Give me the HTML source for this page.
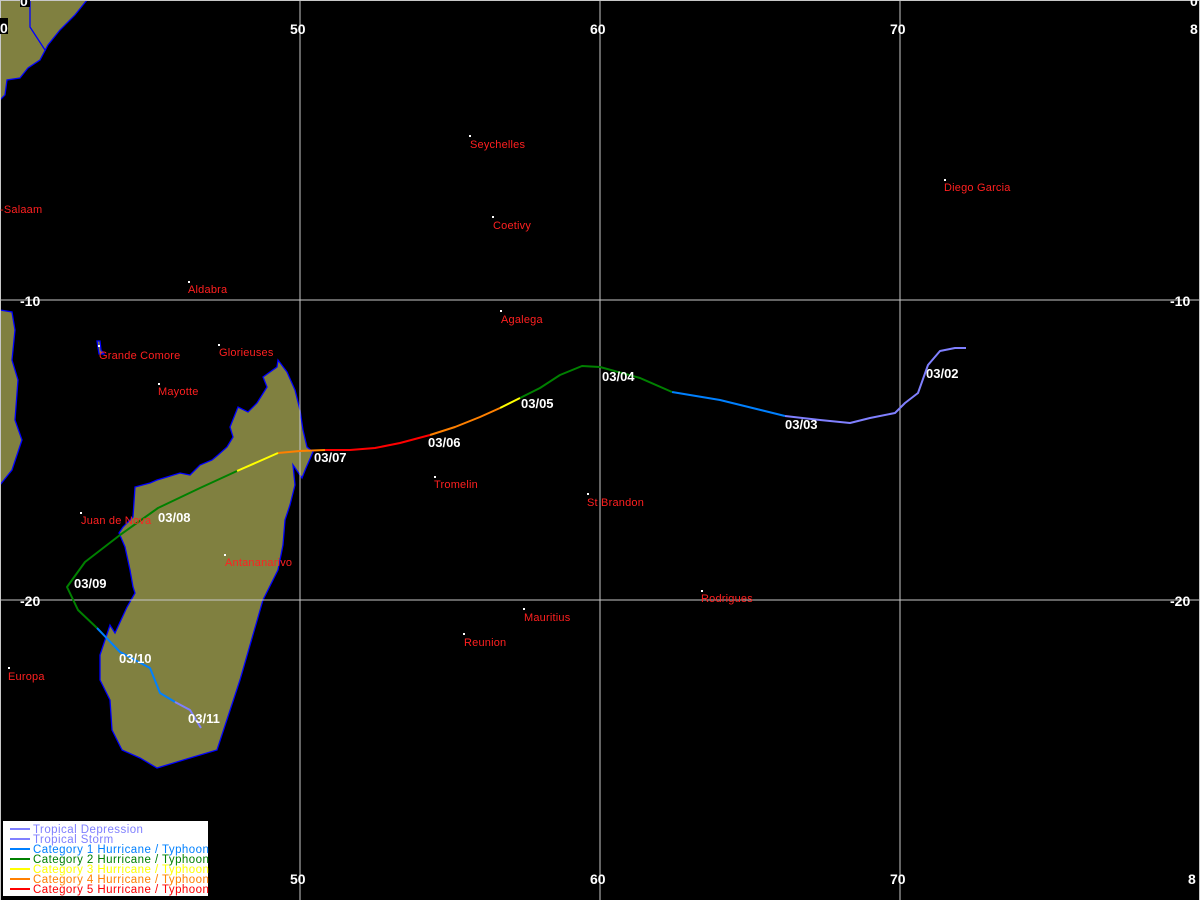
<!DOCTYPE html>
<html><head><meta charset="utf-8"><style>
html,body{margin:0;padding:0;background:#000;}
svg{display:block}
text{font-family:"Liberation Sans",sans-serif;}
.pl{fill:#ff2020;font-size:11px;letter-spacing:0.2px}
.dt{fill:#fff;font-size:13px;font-weight:bold}
.ax{fill:#fff;font-size:14px;font-weight:bold}
.lg{font-size:11.5px;letter-spacing:0.45px}
</style></head><body>
<svg width="1200" height="900" viewBox="0 0 1200 900" xmlns="http://www.w3.org/2000/svg">
<rect width="1200" height="900" fill="#000"/>
<g fill="#808040" stroke="#0000ff" stroke-width="1.3">
<polygon points="0,0 87,0 75,15 60,30 48,45 40,60 28,68 20,78 7,80 5,95 0,100"/>
<polygon points="0,310 12,312 15,330 12,360 18,380 15,420 22,440 12,470 0,485"/>
<polygon points="278,360 287,372 295,390 300,410 303,430 307,447 313,452 306,468 302,478 293,465 295,485 290,505 285,520 283,545 278,570 263,600 240,680 217,750 190,758 157,768 140,758 122,750 112,730 110,700 100,680 100,655 110,625 115,633 127,607 135,593 133,587 130,570 125,547 119,533 123,527 133,517 135,487 150,483 157,480 167,477 180,473 190,475 193,472 200,465 212,460 218,455 227,447 233,437 230,427 238,407 248,412 257,403 267,387 263,377 277,367"/>
<polygon points="97,341 100,341 101,350 104,354 99,354"/>
</g>
<polyline points="30,0 30,27 45,50" fill="none" stroke="#0000ff" stroke-width="1.3"/>
<g stroke="#c8c8c8" stroke-width="1">
<line x1="300" y1="0" x2="300" y2="900"/><line x1="600" y1="0" x2="600" y2="900"/><line x1="900" y1="0" x2="900" y2="900"/>
<line x1="0" y1="300" x2="1200" y2="300"/><line x1="0" y1="600" x2="1200" y2="600"/>
<line x1="0.5" y1="0" x2="0.5" y2="900"/><line x1="1199.5" y1="0" x2="1199.5" y2="900"/><line x1="0" y1="0.5" x2="1200" y2="0.5"/>
</g>
<g fill="none" stroke-width="2" stroke-linejoin="round">
<polyline stroke="#8080ff" points="966,348 955,348 940,351 928,365 918,393 905,403 895,413 870,418 850,423 820,420 785,416"/>
<polyline stroke="#0080ff" points="785,416 720,400 672,392"/>
<polyline stroke="#008000" points="672,392 640,378 600,367 582,366 560,375 540,388 520,398"/>
<polyline stroke="#ffff00" points="520,398 500,408"/>
<polyline stroke="#ff8000" points="500,408 480,417 455,427 430,435"/>
<polyline stroke="#ff0000" points="430,435 400,443 375,448 350,450 325,450"/>
<polyline stroke="#ff8000" points="325,450 300,451 278,453"/>
<polyline stroke="#ffff00" points="278,453 237,471"/>
<polyline stroke="#008000" points="237,471 200,488 158,508 120,535 85,562 67,587 78,610 97,628"/>
<polyline stroke="#0080ff" points="97,628 120,652 150,668 160,693 175,702"/>
<polyline stroke="#8080ff" points="175,702 190,710 201,728"/>
</g>
<g fill="#fff">
<rect x="469" y="135" width="2" height="2"/><rect x="492" y="216" width="2" height="2"/><rect x="944" y="179" width="2" height="2"/>
<rect x="188" y="281" width="2" height="2"/><rect x="500" y="310" width="2" height="2"/><rect x="98" y="345" width="2" height="2"/>
<rect x="218" y="344" width="2" height="2"/><rect x="158" y="383" width="2" height="2"/><rect x="434" y="476" width="2" height="2"/>
<rect x="587" y="493" width="2" height="2"/><rect x="80" y="512" width="2" height="2"/><rect x="224" y="554" width="2" height="2"/>
<rect x="701" y="590" width="2" height="2"/><rect x="523" y="608" width="2" height="2"/><rect x="463" y="633" width="2" height="2"/>
<rect x="8" y="667" width="2" height="2"/>
</g>
<g class="pl">
<text x="470" y="148">Seychelles</text><text x="493" y="229">Coetivy</text><text x="944" y="191">Diego Garcia</text>
<text x="0" y="213">-Salaam</text><text x="188" y="293">Aldabra</text><text x="501" y="323">Agalega</text>
<text x="99" y="359">Grande Comore</text><text x="219" y="356">Glorieuses</text><text x="158" y="395">Mayotte</text>
<text x="434" y="488">Tromelin</text><text x="587" y="506">St Brandon</text><text x="81" y="524">Juan de Nova</text>
<text x="225" y="566">Antananarivo</text><text x="701" y="602">Rodrigues</text><text x="524" y="621">Mauritius</text>
<text x="464" y="646">Reunion</text><text x="8" y="680">Europa</text>
</g>
<g class="dt">
<text x="926" y="378">03/02</text><text x="785" y="429">03/03</text><text x="602" y="381">03/04</text>
<text x="521" y="408">03/05</text><text x="428" y="447">03/06</text><text x="314" y="462">03/07</text>
<text x="158" y="522">03/08</text><text x="74" y="588">03/09</text><text x="119" y="663">03/10</text><text x="188" y="723">03/11</text>
</g>
<g class="ax">
<rect x="20" y="0" width="10" height="7" fill="#000"/><text x="20" y="6">0</text>
<rect x="0" y="18" width="8" height="16" fill="#000"/><text x="0" y="33">0</text>
<text x="290" y="34">50</text><text x="590" y="34">60</text><text x="890" y="34">70</text><text x="1190" y="34">8</text>
<text x="1190" y="6">0</text>
<text x="20" y="306">-10</text><text x="1170" y="306">-10</text>
<text x="20" y="606">-20</text><text x="1170" y="606">-20</text>
<text x="290" y="884">50</text><text x="590" y="884">60</text><text x="890" y="884">70</text><text x="1188" y="884">8</text>
</g>
<rect x="3" y="821" width="205" height="75" fill="#fff"/>
<g stroke-width="2">
<line x1="10" y1="829" x2="30" y2="829" stroke="#8080ff"/>
<line x1="10" y1="839" x2="30" y2="839" stroke="#8080ff"/>
<line x1="10" y1="849" x2="30" y2="849" stroke="#0080ff"/>
<line x1="10" y1="859" x2="30" y2="859" stroke="#008000"/>
<line x1="10" y1="869" x2="30" y2="869" stroke="#ffff00"/>
<line x1="10" y1="879" x2="30" y2="879" stroke="#ff8000"/>
<line x1="10" y1="889" x2="30" y2="889" stroke="#ff0000"/>
</g>
<g class="lg">
<text x="33" y="833" fill="#8080ff">Tropical Depression</text>
<text x="33" y="843" fill="#8080ff">Tropical Storm</text>
<text x="33" y="853" fill="#0080ff">Category 1 Hurricane / Typhoon</text>
<text x="33" y="863" fill="#008000">Category 2 Hurricane / Typhoon</text>
<text x="33" y="873" fill="#ffff00">Category 3 Hurricane / Typhoon</text>
<text x="33" y="883" fill="#ff8000">Category 4 Hurricane / Typhoon</text>
<text x="33" y="893" fill="#ff0000">Category 5 Hurricane / Typhoon</text>
</g>
</svg>
</body></html>
